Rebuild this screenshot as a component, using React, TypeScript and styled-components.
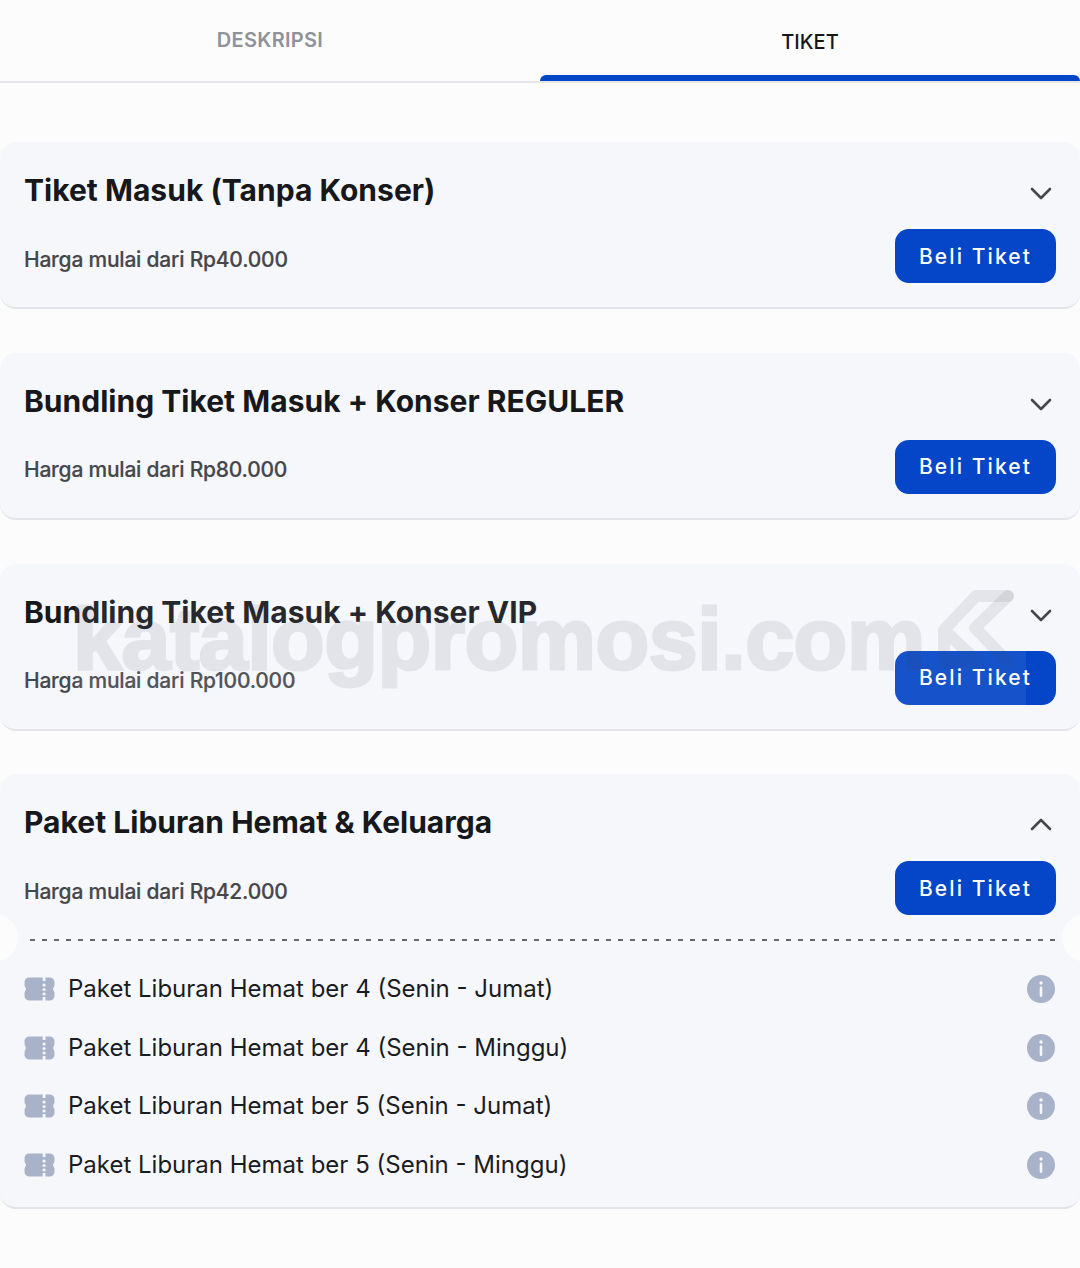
import React from "react";
import styled, { createGlobalStyle } from "styled-components";

const Global = createGlobalStyle`
  html, body { margin: 0; padding: 0; background: #fcfcfd; }
  body { font-family: Inter, "Noto Sans", sans-serif; width: 1080px; height: 1268px; overflow: hidden; }
`;
const Page = styled.div`position: relative; width: 1080px; height: 1268px; background: #fcfcfd; overflow: hidden;`;
const Tabs = styled.div`display: flex; height: 81px; border-bottom: 2px solid #e4e6ea; box-sizing: content-box;`;
const Tab = styled.div<{ $active?: boolean }>`
  position: relative; width: 540px; display: flex; justify-content: center;
  padding-top: ${p => (p.$active ? 30 : 28)}px; box-sizing: border-box;
  font-size: 20px; line-height: 24px; font-weight: ${p => (p.$active ? 500 : 600)}; letter-spacing: ${p => (p.$active ? "0px" : "0.3px")};
  color: ${p => (p.$active ? "#15171a" : "#8e929b")};
  ${p => p.$active && `&::after { content: ""; position: absolute; left: 0; right: 0; bottom: 0; height: 6px; background: #0546c8; border-radius: 6px 6px 0 0; }`}
`;
const List = styled.div`display: flex; flex-direction: column; gap: 43.75px; padding-top: 59px;`;
const Card = styled.section`
  position: relative; background: #f6f7fb; border-radius: 16px; padding: 24px 24px 24px;
  border-bottom: 2px solid #e2e4e9; box-sizing: border-box;
`;
const TitleRow = styled.div`display: flex; justify-content: space-between; align-items: center; height: 48px;`;
const Title = styled.h2`margin: 0; font-size: 30px; line-height: 48px; font-weight: 700; letter-spacing: 0.02px; color: #17181b;`;
const PriceRow = styled.div`display: flex; justify-content: space-between; align-items: center; margin-top: 15px;`;
const Price = styled.div`font-size: 21px; line-height: 28px; font-weight: 500; color: #46474b; padding-top: 7px; letter-spacing: -0.22px; -webkit-text-stroke: 0.2px #46474b;`;
const Buy = styled.button`
  width: 161px; height: 54px; border: 0; border-radius: 14px; background: #0546c8; color: #fff;
  font: 500 21px Inter, sans-serif; letter-spacing: 2.1px; padding: 0;
`;
const Chevron = styled.svg`width: 24px; height: 24px; margin-right: 3px; margin-top: 8px; display: block;`;
const Divider = styled.div`
  margin: 24px 0 0 6px; height: 2px;
  background: repeating-linear-gradient(90deg, #66686e 0 5px, transparent 5px 12px);
`;
const Notch = styled.div<{ $side: "left" | "right" }>`
  position: absolute; top: 140px; width: 48px; height: 48px; border-radius: 50%; background: #fcfcfd;
  ${p => p.$side}: -30px;
`;
const Items = styled.div`display: flex; flex-direction: column; gap: 22.5px; padding-top: 30px;`;
const Item = styled.div`display: flex; align-items: center; height: 36px;`;
const ItemLabel = styled.span`flex: 1; margin-left: 13px; font-size: 24px; line-height: 36px; letter-spacing: 0px; color: #1b1c1f;`;
const InfoIcon = styled.svg`margin-right: 1px; display: block;`;
const Watermark = styled.div`
  position: absolute; left: 75px; top: 590px; width: 951px; height: 116px; background: rgba(255,255,255,0.07);
  pointer-events: none;
`;
const WmText = styled.span`
  position: absolute; left: -2px; top: -1px; font: 700 88px/100px "Liberation Sans", sans-serif; letter-spacing: -0.5px;
  color: #3c3c46; -webkit-text-stroke: 3px #3c3c46; opacity: 0.095; white-space: nowrap;
`;
const WmLogo = styled.svg`position: absolute; left: 855px; top: -5px; width: 96px; height: 90px;`;

const Down = ({ up }: { up?: boolean }) => (
  <Chevron viewBox="0 0 24 24" fill="none" stroke="#45474b" strokeWidth="2.6" strokeLinecap="round" strokeLinejoin="round">
    <path d={up ? "M3 15 12 6l9 9" : "M3 7l9 9 9-9"} />
  </Chevron>
);
const Ticket = () => (
  <svg width="31" height="24" viewBox="1 0 29 24" preserveAspectRatio="none">
    <path fill="#a8b3ca" d="M6 .5h19a4.500 4.500 0 0 1 4.500 4.500v3.400c0 1-1.300 2-1.300 3.600s1.300 2.600 1.300 3.600V19a4.500 4.500 0 0 1-4.500 4.500H6A4.500 4.500 0 0 1 1.500 19v-3.400c0-1 1.300-2 1.300-3.600s-1.300-2.600-1.300-3.600V5A4.500 4.500 0 0 1 6 .5Z" />
    <g fill="#f6f7fb">
      <rect x="18.500" y="0" width="2.600" height="4" />
      <rect x="18.500" y="20" width="2.600" height="4" />
      <circle cx="19.800" cy="8" r="1.500" />
      <circle cx="19.800" cy="12.500" r="1.500" />
      <circle cx="19.800" cy="17" r="1.500" />
    </g>
  </svg>
);
const Info = () => (
  <InfoIcon width="28" height="28" viewBox="0 0 28 28">
    <circle cx="14" cy="14" r="14" fill="#a8b3ca" />
    <circle cx="14" cy="8" r="1.700" fill="#f6f7fb" />
    <rect x="12.700" y="11.500" width="2.600" height="10.500" rx="1.300" fill="#f6f7fb" />
  </InfoIcon>
);

const cards = [
  ["Tiket Masuk (Tanpa Konser)", "Harga mulai dari Rp40.000"],
  ["Bundling Tiket Masuk + Konser REGULER", "Harga mulai dari Rp80.000"],
  ["Bundling Tiket Masuk + Konser VIP", "Harga mulai dari Rp100.000"],
];
const items = [
  "Paket Liburan Hemat ber 4 (Senin - Jumat)",
  "Paket Liburan Hemat ber 4 (Senin - Minggu)",
  "Paket Liburan Hemat ber 5 (Senin - Jumat)",
  "Paket Liburan Hemat ber 5 (Senin - Minggu)",
];

export default function App() {
  return (
    <Page>
      <Global />
      <Tabs>
        <Tab>DESKRIPSI</Tab>
        <Tab $active>TIKET</Tab>
      </Tabs>
      <List>
        {cards.map(([t, p]) => (
          <Card key={t}>
            <TitleRow><Title>{t}</Title><Down /></TitleRow>
            <PriceRow><Price>{p}</Price><Buy>Beli Tiket</Buy></PriceRow>
          </Card>
        ))}
        <Card>
          <TitleRow><Title>Paket Liburan Hemat &amp; Keluarga</Title><Down up /></TitleRow>
          <PriceRow><Price>Harga mulai dari Rp42.000</Price><Buy>Beli Tiket</Buy></PriceRow>
          <Divider />
          <Notch $side="left" />
          <Notch $side="right" />
          <Items>
            {items.map(i => (
              <Item key={i}><Ticket /><ItemLabel>{i}</ItemLabel><Info /></Item>
            ))}
          </Items>
        </Card>
      </List>
      <Watermark>
        <WmText>katalogpromosi.com</WmText>
        <WmLogo viewBox="930 585 96 90" fill="none" stroke="rgba(60,60,70,0.095)" strokeWidth="12" strokeLinejoin="round" strokeLinecap="round">
          <path d="M1008 596H976L944 630V662H978L946 632" />
          <path d="M1008 596 975 628l33 34" />
        </WmLogo>
      </Watermark>
    </Page>
  );
}
